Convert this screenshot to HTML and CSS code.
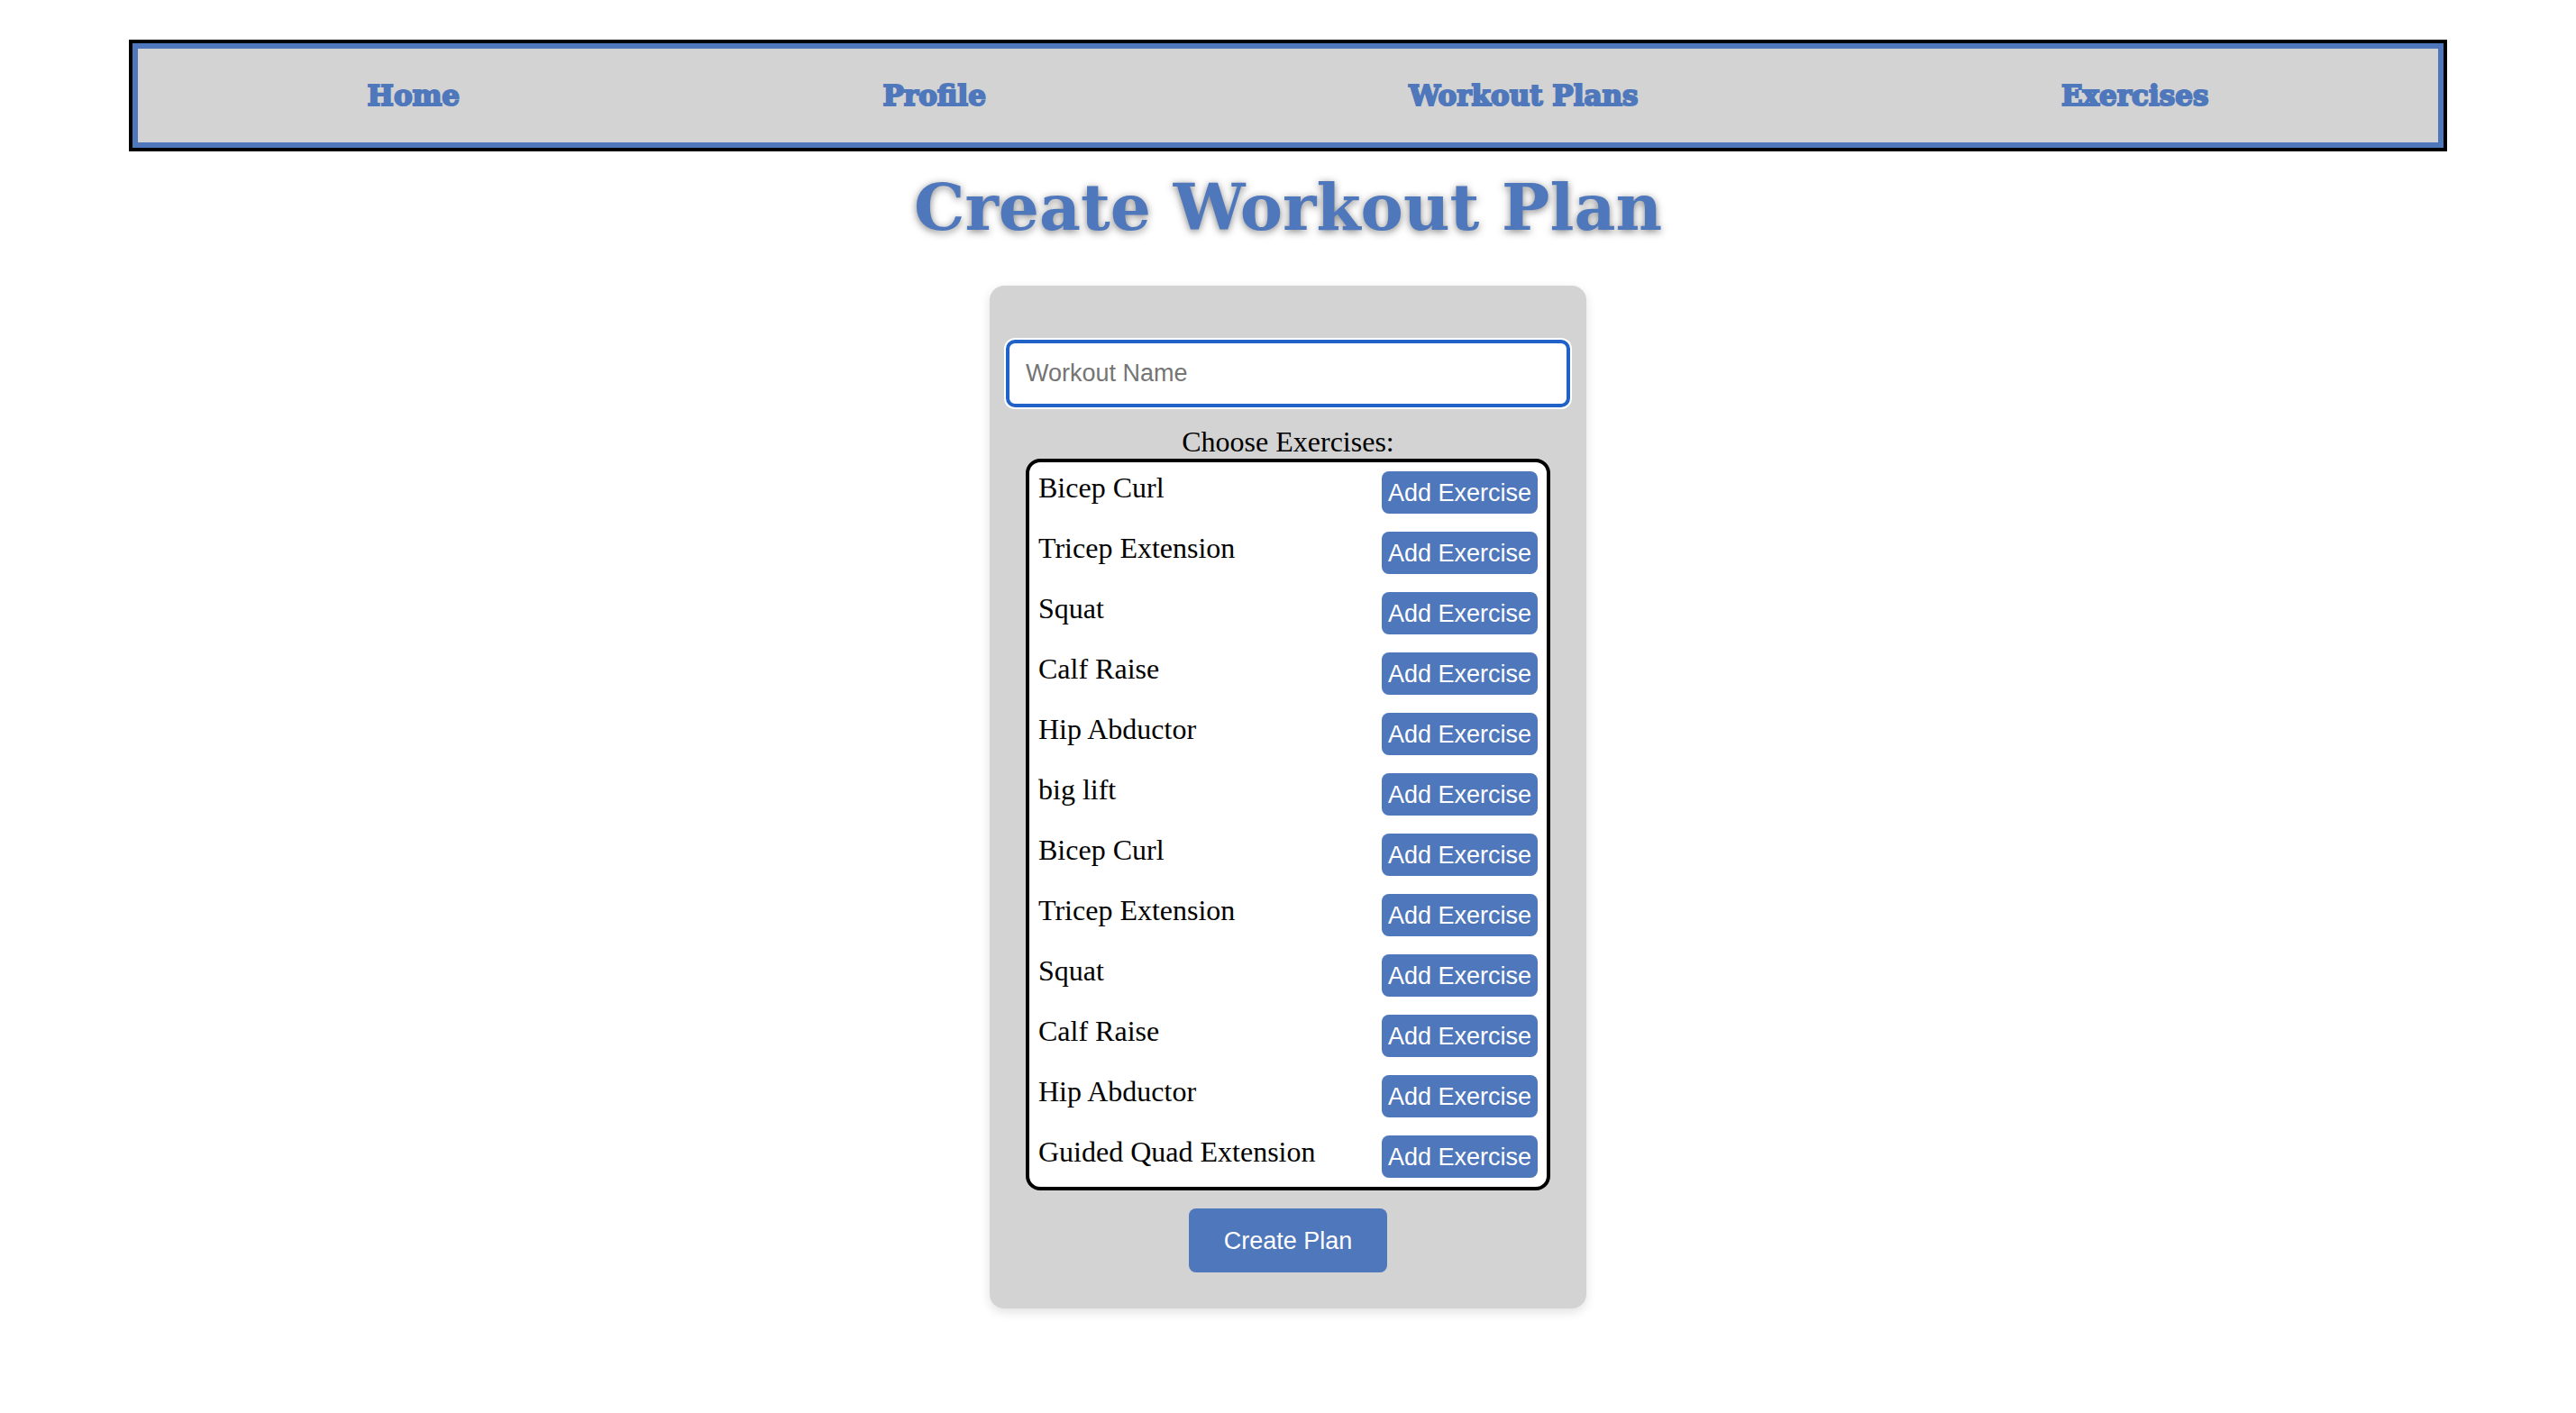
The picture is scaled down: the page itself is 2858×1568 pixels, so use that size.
FILE: index.html
```html
<!DOCTYPE html>
<html lang="en">
<head>
<meta charset="utf-8">
<meta name="viewport" content="width=device-width, initial-scale=1">
<title>Create Workout Plan</title>
<link rel="stylesheet" href="styles.css">
</head>
<body>
<nav class="navbar">
  <a class="nav-link" href="#home">Home</a>
  <a class="nav-link" href="#profile">Profile</a>
  <a class="nav-link" href="#plans">Workout Plans</a>
  <a class="nav-link" href="#exercises">Exercises</a>
</nav>
<main class="page">
  <h1 class="title">Create Workout Plan</h1>
  <form class="plan-form">
    <input class="name-input" type="text" placeholder="Workout Name" aria-label="Workout Name">
    <h2 class="list-label" id="choose">Choose Exercises:</h2>
    <ul class="exercise-list" aria-labelledby="choose">
      <li class="exercise">Bicep Curl<button class="btn add" type="button">Add Exercise</button></li>
      <li class="exercise">Tricep Extension<button class="btn add" type="button">Add Exercise</button></li>
      <li class="exercise">Squat<button class="btn add" type="button">Add Exercise</button></li>
      <li class="exercise">Calf Raise<button class="btn add" type="button">Add Exercise</button></li>
      <li class="exercise">Hip Abductor<button class="btn add" type="button">Add Exercise</button></li>
      <li class="exercise">big lift<button class="btn add" type="button">Add Exercise</button></li>
      <li class="exercise">Bicep Curl<button class="btn add" type="button">Add Exercise</button></li>
      <li class="exercise">Tricep Extension<button class="btn add" type="button">Add Exercise</button></li>
      <li class="exercise">Squat<button class="btn add" type="button">Add Exercise</button></li>
      <li class="exercise">Calf Raise<button class="btn add" type="button">Add Exercise</button></li>
      <li class="exercise">Hip Abductor<button class="btn add" type="button">Add Exercise</button></li>
      <li class="exercise">Guided Quad Extension<button class="btn add" type="button">Add Exercise</button></li>
    </ul>
    <button class="btn create" type="submit">Create Plan</button>
  </form>
</main>
</body>
</html>
```
FILE: styles.css
```css
* {
  box-sizing: border-box;
}

body {
  margin: 0;
  background: #fff;
  color: #000;
  font-family: "Liberation Serif", "Times New Roman", serif;
  font-size: 32px;
  line-height: 37px;
}

.navbar {
  display: flex;
  justify-content: space-around;
  margin: 44px 5% 0;
  padding: 32px 20px;
  border: 10px solid #4f77bb;
  outline: 4px solid #000;
  outline-offset: -4px;
  background: #d3d3d3;
}

.nav-link {
  color: #4f77bb;
  font-family: "DejaVu Serif", serif;
  font-size: 31px;
  font-weight: 700;
  line-height: 40px;
  text-decoration: none;
  -webkit-text-stroke: 2px #4f77bb;
}

.page {
  padding-bottom: 80px;
}

.title {
  margin: 22px 0 47px;
  color: #4f77bb;
  font-family: "DejaVu Serif", serif;
  font-size: 71px;
  font-weight: 700;
  line-height: 80px;
  text-align: center;
  text-shadow: 0 2px 8px rgba(0, 0, 0, 0.5);
}

.plan-form {
  display: flex;
  flex-direction: column;
  align-items: center;
  width: 100%;
  max-width: 662px;
  margin: 0 auto;
  padding: 60px 18px 40px;
  border-radius: 16px;
  background: #d3d3d3;
  box-shadow: 0 4px 12px rgba(0, 0, 0, 0.12);
}

.name-input {
  width: 100%;
  margin-bottom: 20px;
  padding: 18px;
  border: 4px solid #2162c8;
  border-radius: 10px;
  background: #fff;
  box-shadow: 0 0 0 2px #fff;
  font-family: "Liberation Sans", Arial, sans-serif;
  font-size: 27px;
  line-height: 31px;
  outline: none;
}

.name-input::placeholder {
  color: #757575;
}

.list-label {
  margin: 0;
  font-size: 32px;
  font-weight: 400;
}

.exercise-list {
  display: flex;
  flex-direction: column;
  gap: 20px;
  width: 100%;
  max-width: 582px;
  margin: 0 0 20px;
  padding: 10px;
  border: 4px solid #000;
  border-radius: 16px;
  background: #fff;
  list-style: none;
}

.exercise {
  display: flex;
  justify-content: space-between;
}

.btn {
  border: 0;
  border-radius: 8px;
  background: #4f77bb;
  color: #fff;
  font-family: "Liberation Sans", Arial, sans-serif;
  font-size: 27px;
  line-height: 31px;
}

.add {
  padding: 9px 7px 7px;
}

.create {
  padding: 21px 39px 19px;
}
```
